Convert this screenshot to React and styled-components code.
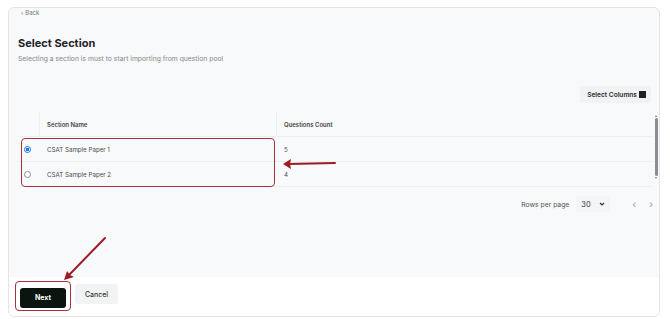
import React, { useState } from "react";
import styled, { createGlobalStyle } from "styled-components";

const GlobalStyle = createGlobalStyle`
  body {
    margin: 0;
    background: #ffffff;
    font-family: Inter, "Liberation Sans", sans-serif;
  }
`;

const Page = styled.div`
  position: relative;
  width: 670px;
  height: 319px;
  padding: 7px 0 0 8px;
  box-sizing: border-box;
`;

const Card = styled.div`
  width: 652px;
  height: 310px;
  box-sizing: border-box;
  border: 1px solid #e2e4e7;
  border-radius: 6px;
  overflow: hidden;
  display: flex;
  flex-direction: column;
  background: #f8f9fa;
`;

const Body = styled.div`
  flex: 1;
  display: flex;
  flex-direction: column;
  padding: 0 0 0 9px;
`;

const BackLink = styled.div`
  height: 9px;
  display: flex;
  align-items: center;
  gap: 2px;
  padding-left: 3px;
  font-size: 6px;
  color: #777;
`;

const Title = styled.h1`
  margin: 19px 0 0;
  font-size: 11px;
  line-height: 14px;
  font-weight: 700;
  color: #1f2328;
`;

const Subtitle = styled.p`
  margin: 4px 0 0;
  font-size: 6.8px;
  line-height: 9px;
  color: #85888c;
`;

const Toolbar = styled.div`
  display: flex;
  justify-content: flex-end;
  margin-top: 23px;
  padding-right: 8px;
`;

const ColumnsButton = styled.button`
  height: 17px;
  display: flex;
  align-items: center;
  gap: 2px;
  padding: 0 5px 0 7px;
  border: none;
  border-radius: 3px;
  background: #f1f2f3;
  font-family: inherit;
  font-size: 6.6px;
  font-weight: 600;
  color: #2a2d30;
`;

const Square = styled.span`
  width: 7px;
  height: 7px;
  background: #1c2420;
  display: inline-block;
`;

const TableArea = styled.div`
  position: relative;
  display: flex;
  margin-top: 9px;
`;

const Table = styled.div`
  flex: 1;
  display: grid;
  grid-template-columns: 22px 237px 1fr;
`;

const Cell = styled.div`
  height: 24px;
  display: flex;
  align-items: center;
  padding-left: ${(p) => (p.$pad ? "7px" : "0")};
  border-bottom: 1px solid #eceef0;
  border-right: ${(p) => (p.$divider ? "1px solid #eceef0" : "none")};
  font-size: ${(p) => (p.$head ? "6px" : "6.2px")};
  font-weight: ${(p) => (p.$head ? 600 : 400)};
  color: ${(p) => (p.$head ? "#444" : "#4d4d4d")};
`;

const Radio = styled.span`
  width: 7px;
  height: 7px;
  border-radius: 50%;
  box-sizing: border-box;
  border: 1px solid ${(p) => (p.$on ? "#1a73e8" : "#8c8f93")};
  background: ${(p) => (p.$on ? "radial-gradient(circle, #1a73e8 45%, #fff 55%)" : "#fff")};
  margin-left: 6px;
`;

const Scrollbar = styled.div`
  width: 6px;
  padding-top: 3px;
  display: flex;
  flex-direction: column;
  align-items: center;
  gap: 1px;
`;

const Thumb = styled.div`
  width: 3px;
  height: 58px;
  border-radius: 2px;
  background: #8b8d90;
`;

const Tri = styled.div`
  width: 0;
  height: 0;
  border-left: 1.5px solid transparent;
  border-right: 1.5px solid transparent;
  ${(p) => (p.$up ? "border-bottom: 2px solid #777;" : "border-top: 2px solid #777;")}
`;

const Highlight = styled.div`
  position: absolute;
  left: 3px;
  top: 26px;
  width: 254px;
  height: 49px;
  box-sizing: border-box;
  border: 1.5px solid #a8323c;
  border-radius: 4px;
  pointer-events: none;
`;

const Pagination = styled.div`
  display: flex;
  align-items: center;
  justify-content: flex-end;
  margin-top: 9px;
  padding-right: 6px;
  font-size: 6.8px;
  color: #555;
`;

const RowsSelect = styled.div`
  width: 34px;
  height: 16px;
  margin: 0 22px 0 7px;
  display: flex;
  align-items: center;
  justify-content: space-between;
  padding: 0 5px;
  box-sizing: border-box;
  background: #f4f5f6;
  border-radius: 3px;
  font-size: 7.5px;
  color: #333;
`;

const Pager = styled.span`
  font-size: 10px;
  color: #999;
  margin-left: ${(p) => (p.$gap ? "13px" : "0")};
`;

const Footer = styled.div`
  height: 39px;
  flex: none;
  background: #ffffff;
  display: flex;
  align-items: flex-start;
  gap: 4px;
  padding: 4px 0 0 6px;
  box-sizing: border-box;
`;

const Ring = styled.div`
  border: 1px solid #a8323c;
  border-radius: 4px;
  padding: 2px 4px;
`;

const Button = styled.button`
  width: ${(p) => (p.$primary ? "46px" : "43px")};
  height: 20px;
  border: none;
  border-radius: 3px;
  font-family: inherit;
  font-size: 7px;
  font-weight: ${(p) => (p.$primary ? 700 : 500)};
  color: ${(p) => (p.$primary ? "#fff" : "#333")};
  background: ${(p) => (p.$primary ? "#0b1510" : "#f2f3f4")};
  margin-top: ${(p) => (p.$primary ? "0" : "3px")};
`;

const Arrow = styled.svg`
  position: absolute;
  overflow: visible;
  pointer-events: none;
`;

const rows = [
  { name: "CSAT Sample Paper 1", count: 5 },
  { name: "CSAT Sample Paper 2", count: 4 },
];

export default function App() {
  const [selected, setSelected] = useState(0);

  return (
    <Page>
      <GlobalStyle />
      <Card>
        <Body>
          <BackLink>
            <span>‹</span>
            <span>Back</span>
          </BackLink>
          <Title>Select Section</Title>
          <Subtitle>Selecting a section is must to start importing from question pool</Subtitle>
          <Toolbar>
            <ColumnsButton>
              Select Columns <Square />
            </ColumnsButton>
          </Toolbar>
          <TableArea>
            <Table>
              <Cell $head $divider />
              <Cell $head $pad $divider>Section Name</Cell>
              <Cell $head $pad>Questions Count</Cell>
              {rows.map((r, i) => (
                <React.Fragment key={r.name}>
                  <Cell onClick={() => setSelected(i)}>
                    <Radio $on={selected === i} />
                  </Cell>
                  <Cell $pad>{r.name}</Cell>
                  <Cell $pad>{r.count}</Cell>
                </React.Fragment>
              ))}
            </Table>
            <Scrollbar>
              <Tri $up />
              <Thumb />
              <Tri />
            </Scrollbar>
            <Highlight />
          </TableArea>
          <Pagination>
            <span>Rows per page</span>
            <RowsSelect>
              <span>30</span>
              <svg width="6" height="4" viewBox="0 0 6 4">
                <path d="M1 1l2 2 2-2" fill="none" stroke="#333" strokeWidth="1.2" />
              </svg>
            </RowsSelect>
            <Pager>‹</Pager>
            <Pager $gap>›</Pager>
          </Pagination>
        </Body>
        <Footer>
          <Ring>
            <Button $primary>Next</Button>
          </Ring>
          <Button>Cancel</Button>
        </Footer>
      </Card>

      <Arrow style={{ left: 0, top: 0 }} width="670" height="319">
        <g stroke="#9b1c25" strokeWidth="2" fill="none" strokeLinecap="round">
          <line x1="335" y1="163" x2="288" y2="164" />
          <line x1="105" y1="238" x2="68" y2="276" />
        </g>
        <path d="M283 164 L291 159 L290 164 L291 169 Z" fill="#9b1c25" />
        <path d="M64 280 L67 271 L70 275 L74 277 Z" fill="#9b1c25" />
      </Arrow>
    </Page>
  );
}
